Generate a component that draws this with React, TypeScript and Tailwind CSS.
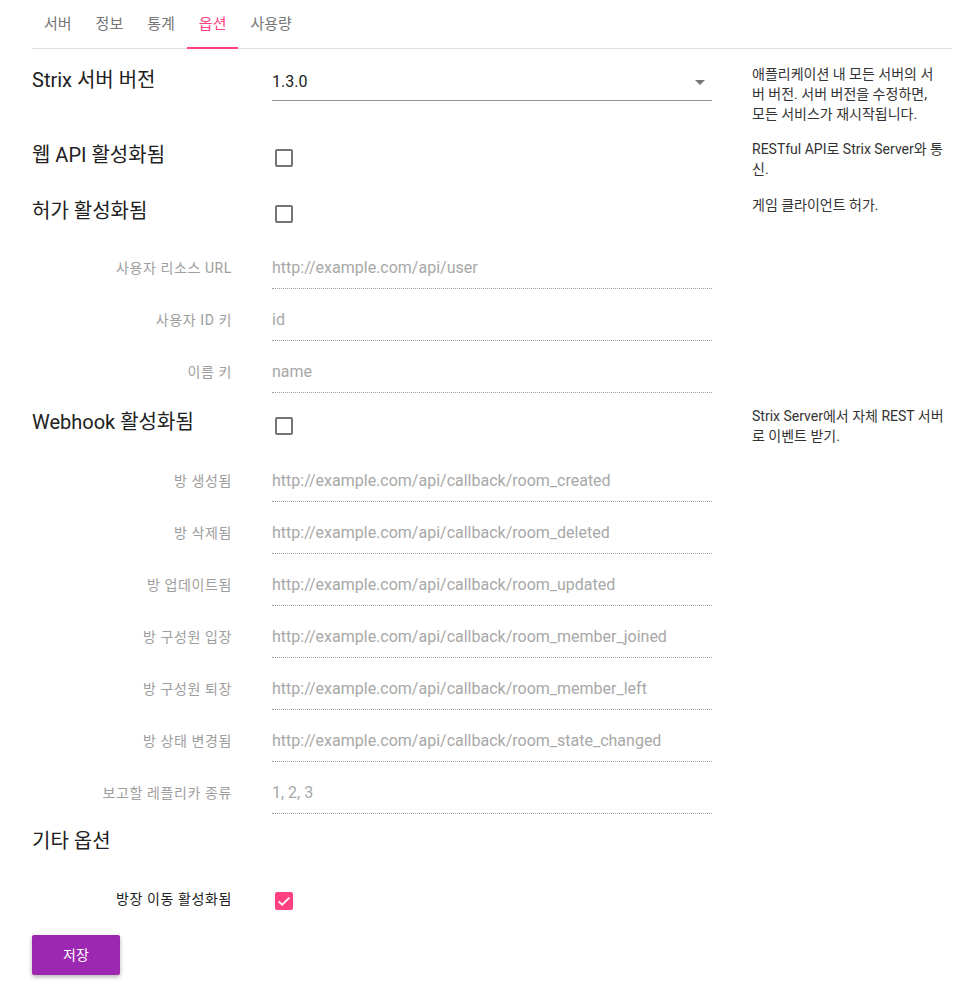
import type { ReactNode } from "react";

const font = "font-['Roboto','Noto_Sans_CJK_KR',sans-serif]";

const tabs = ["서버", "정보", "통계", "옵션", "사용량"];

function Checkbox({ checked = false, className = "" }: { checked?: boolean; className?: string }) {
  if (checked) {
    return (
      <div className={`ml-[3px] flex h-[18px] w-[18px] items-center justify-center rounded-[2px] bg-[#ff4081] ${className}`}>
        <svg width="16" height="16" viewBox="0 0 24 24" fill="none">
          <path d="M4 12.5l5.2 5.2L20 7" stroke="white" strokeWidth="2.8" />
        </svg>
      </div>
    );
  }
  return <div className={`ml-[3px] h-[18px] w-[18px] rounded-[2px] border-2 border-[#757575] ${className}`} />;
}

function Row({ children, className = "" }: { children: ReactNode; className?: string }) {
  return <div className={`grid grid-cols-[200px_440px_200px] gap-x-10 items-start ${className}`}>{children}</div>;
}

function SubRow({ label, placeholder, className = "mt-[19px]" }: { label: string; placeholder: string; className?: string }) {
  return (
    <Row className={className}>
      <div className="whitespace-nowrap text-right text-[14px] leading-6 tracking-[0.6px] text-[#9e9e9e]">{label}</div>
      <div className="border-b border-dotted border-[#9e9e9e] pb-2 text-[16px] leading-6 text-[#a8a8a8]">{placeholder}</div>
      <div />
    </Row>
  );
}

function Heading({ children }: { children: ReactNode }) {
  return <div className="whitespace-nowrap text-[20px] leading-8 text-[#212121]">{children}</div>;
}

function Desc({ children }: { children: ReactNode }) {
  return <div className="whitespace-nowrap text-[14px] leading-5 text-[#333333]">{children}</div>;
}

export default function App() {
  const webhooks = [
    ["방 생성됨", "http://example.com/api/callback/room_created"],
    ["방 삭제됨", "http://example.com/api/callback/room_deleted"],
    ["방 업데이트됨", "http://example.com/api/callback/room_updated"],
    ["방 구성원 입장", "http://example.com/api/callback/room_member_joined"],
    ["방 구성원 퇴장", "http://example.com/api/callback/room_member_left"],
    ["방 상태 변경됨", "http://example.com/api/callback/room_state_changed"],
    ["보고할 레플리카 종류", "1, 2, 3"],
  ];

  return (
    <div className={`min-h-screen bg-white pl-8 pr-6 ${font}`}>
      <nav className="flex h-[49px] border-b border-[#e0e0e0]">
        {tabs.map((t) => (
          <div
            key={t}
            className={`relative flex h-12 items-center px-3 text-[15px] ${t === "옵션" ? "text-[#ff4081]" : "text-[#757575]"}`}
          >
            {t}
            {t === "옵션" && <span className="absolute bottom-[-1px] left-0 right-0 h-[2px] bg-[#ff4081]" />}
          </div>
        ))}
      </nav>

      <Row className="mt-[15px]">
        <Heading>Strix 서버 버전</Heading>
        <div className="flex h-[37px] items-start justify-between border-b border-[#949494] pt-[6px]">
          <span className="text-[16px] leading-6 text-[#212121]">1.3.0</span>
          <svg width="10" height="5" viewBox="0 0 10 5" className="mr-[7px] mt-[10px]">
            <path d="M0 0h10L5 5z" fill="#757575" />
          </svg>
        </div>
        <Desc>
          애플리케이션 내 모든 서버의 서<br />버 버전. 서버 버전을 수정하면,<br />모든 서비스가 재시작됩니다.
        </Desc>
      </Row>

      <Row className="mt-[15px]">
        <Heading>웹 API 활성화됨</Heading>
        <Checkbox className="mt-[10px]" />
        <Desc>
          RESTful API로 Strix Server와 통<br />신.
        </Desc>
      </Row>

      <Row className="mt-4">
        <Heading>허가 활성화됨</Heading>
        <Checkbox className="mt-[10px]" />
        <Desc>게임 클라이언트 허가.</Desc>
      </Row>

      <SubRow className="mt-[29px]" label="사용자 리소스 URL" placeholder="http://example.com/api/user" />
      <SubRow label="사용자 ID 키" placeholder="id" />
      <SubRow label="이름 키" placeholder="name" />

      <Row className="mt-[13px]">
        <Heading>Webhook 활성화됨</Heading>
        <Checkbox className="mt-[11px]" />
        <Desc>
          Strix Server에서 자체 REST 서버<br />로 이벤트 받기.
        </Desc>
      </Row>

      {webhooks.map(([label, ph], i) => (
        <SubRow key={label} className={i === 0 ? "mt-[23px]" : "mt-[19px]"} label={label} placeholder={ph} />
      ))}

      <div className="mt-[11px] text-[20px] leading-8 text-[#212121]">기타 옵션</div>

      <Row className="mt-[30px]">
        <div className="whitespace-nowrap text-right text-[14px] leading-6 tracking-[0.6px] text-[#212121]">방장 이동 활성화됨</div>
        <Checkbox checked className="mt-[5px]" />
        <div />
      </Row>

      <button className="mt-6 h-10 w-[88px] rounded-[2px] bg-[#9c27b0] text-[14px] text-white shadow-[0_2px_4px_rgba(0,0,0,0.3)]">
        저장
      </button>
    </div>
  );
}
